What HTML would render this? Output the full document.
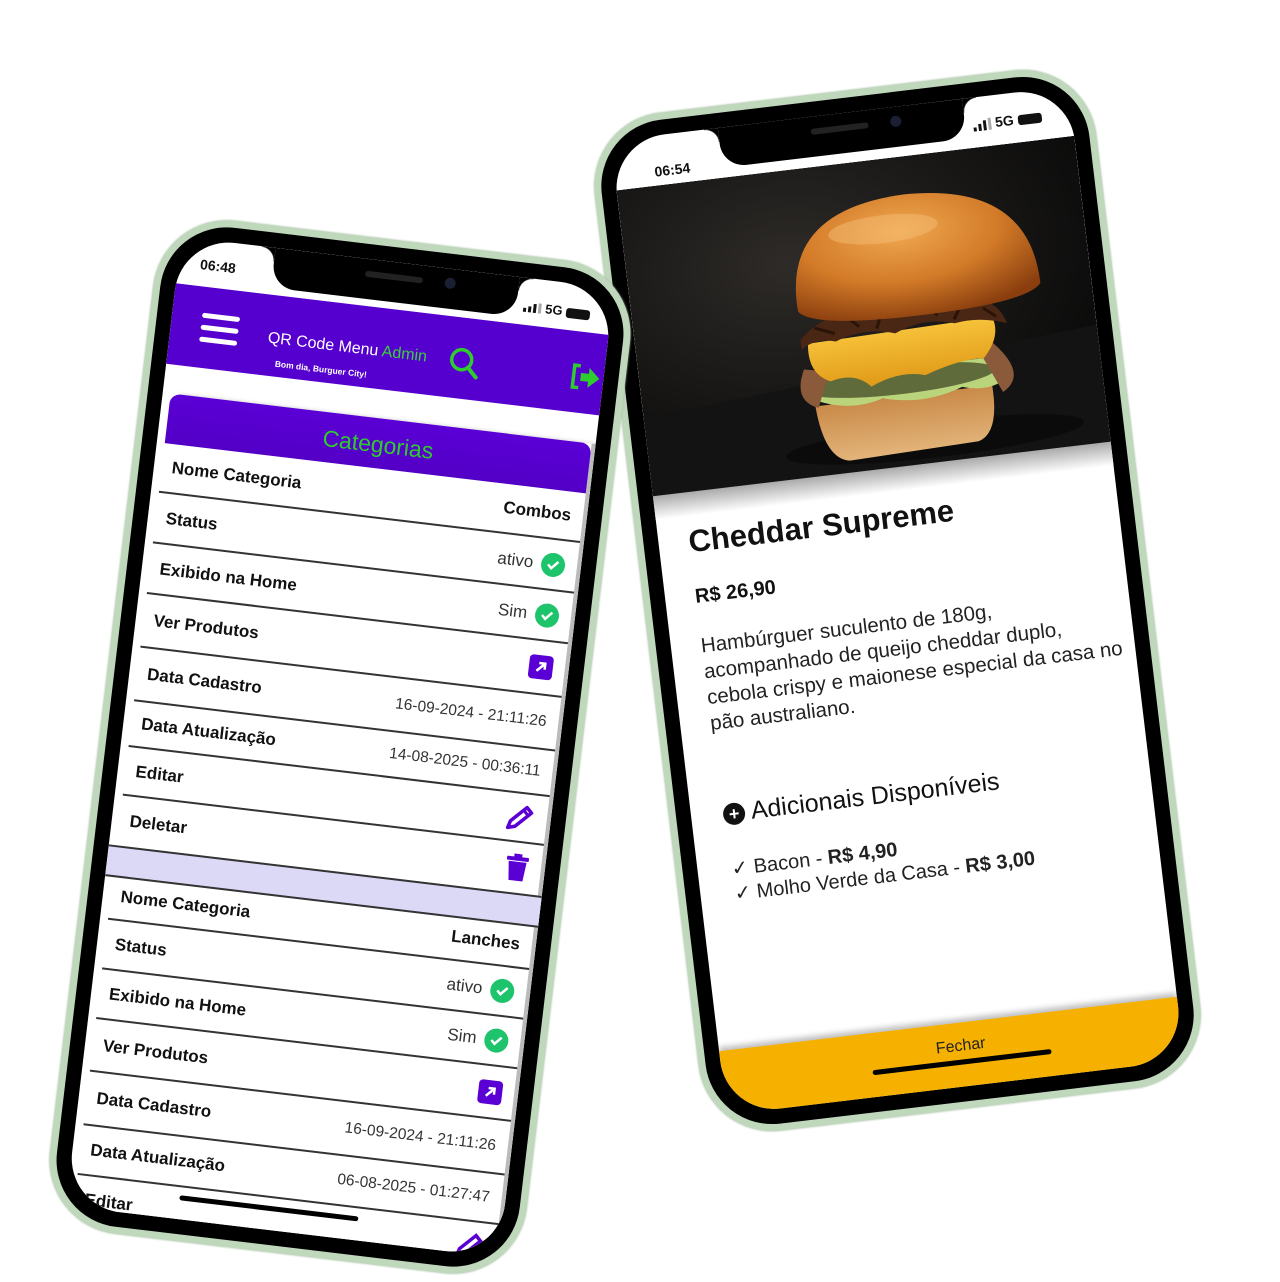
<!DOCTYPE html>
<html><head><meta charset="utf-8">
<style>
html,body{margin:0;padding:0;width:1280px;height:1280px;background:#fff;overflow:hidden;font-family:"Liberation Sans",sans-serif}
.phone{position:absolute;box-sizing:border-box;border:7px solid #bfd8bc;background:#000;border-radius:74px;box-shadow:0 0 2px #9fb89c}
.screen{position:absolute;left:15px;top:15px;background:#fff;border-radius:54px}
.notch{position:absolute;top:0;height:40px;width:246px;background:#000;border-radius:0 0 24px 24px}
.notch:before,.notch:after{content:"";position:absolute;top:0;width:14px;height:14px}
.notch:before{left:-14px;background:radial-gradient(circle at 0 100%,transparent 13px,#000 14px)}
.notch:after{right:-14px;background:radial-gradient(circle at 100% 100%,transparent 13px,#000 14px)}
.spk{position:absolute;top:12px;left:92px;width:58px;height:6px;border-radius:3px;background:#222}
.cam{position:absolute;top:9px;left:172px;width:11px;height:11px;border-radius:50%;background:#1a1f33}
.stat{position:absolute;font-weight:bold;font-size:14px;color:#111}
.sig{position:absolute;display:flex;align-items:flex-end;gap:2px}
.sig i{display:block;width:3px;background:#111}
.bat{display:inline-block;width:24px;height:10px;border:1.5px solid #111;border-radius:3px;background:#111;box-sizing:border-box;vertical-align:middle}
.home{position:absolute;height:5px;width:180px;background:#000;border-radius:3px}
.row{position:absolute;left:0;right:0;border-bottom:2px solid #333;display:flex;align-items:center;justify-content:space-between;padding:0 12px 0 10px;box-sizing:border-box;font-size:17px;color:#111}
.row b{font-weight:bold}
.val{display:flex;align-items:center;gap:8px;color:#333}
.ok{width:24px;height:24px;border-radius:50%;background:#1ec46c;display:inline-flex;align-items:center;justify-content:center}
.pi{width:24px;height:24px;border-radius:4px;background:#5a00d4;display:inline-flex;align-items:center;justify-content:center}
</style></head><body>

<!-- RIGHT PHONE -->
<div class="phone" style="left:645px;top:88px;width:505px;height:1025px;transform:rotate(-6.8deg)">
 <div class="screen" style="width:461px;height:981px;">
  <div style="position:absolute;left:0;top:50px;width:461px;height:310px;overflow:hidden">
   <svg width="461" height="310" viewBox="0 0 461 310">
    <defs>
     <radialGradient id="bg" cx="0.35" cy="0.3" r="0.8"><stop offset="0" stop-color="#2e2b28"/><stop offset="0.6" stop-color="#161514"/><stop offset="1" stop-color="#080808"/></radialGradient>
     <radialGradient id="bun" cx="0.45" cy="0.3" r="0.75"><stop offset="0" stop-color="#f0a850"/><stop offset="0.55" stop-color="#d27a28"/><stop offset="1" stop-color="#8a3e0e"/></radialGradient>
     <linearGradient id="bb" x1="0" y1="0" x2="0" y2="1"><stop offset="0" stop-color="#c98a48"/><stop offset="1" stop-color="#e3b47a"/></linearGradient>
     <linearGradient id="ch" x1="0" y1="0" x2="0" y2="1"><stop offset="0" stop-color="#f7c23a"/><stop offset="1" stop-color="#e09a18"/></linearGradient>
    </defs>
    <rect width="461" height="310" fill="url(#bg)"/>
    <path d="M0 230 L461 190 L461 310 L0 310Z" fill="#131313"/>
    <ellipse cx="287" cy="285" rx="150" ry="18" fill="#0a0a0a" opacity="0.8"/>
    <path d="M172 238 Q175 292 200 296 L330 292 Q352 286 350 238Z" fill="url(#bb)"/>
    <path d="M160 225 Q200 250 240 238 Q280 250 320 236 Q350 246 372 228 L360 210 L170 210Z" fill="#b9d47a"/>
    <ellipse cx="260" cy="222" rx="95" ry="14" fill="#5f6b3a"/>
    <path d="M165 200 Q150 230 175 240 L190 205Z" fill="#8a5a3a"/>
    <path d="M350 190 Q390 230 360 246 L340 200Z" fill="#8a5a3a"/>
    <path d="M172 175 Q168 205 190 215 Q215 208 230 225 Q260 212 285 220 Q320 208 345 210 Q365 190 358 170Z" fill="url(#ch)"/>
    <path d="M165 170 Q200 140 240 150 Q290 135 330 148 Q365 150 372 178 Q345 168 320 172 Q290 162 260 175 Q230 165 200 176 Q180 170 165 180Z" fill="#4a2714"/>
    <path d="M180 160 l20 8 M210 150 l15 14 M250 150 l-8 18 M290 146 l14 16 M330 152 l-10 16 M350 160 l12 10" stroke="#2a1408" stroke-width="3"/>
    <path d="M166 142 Q160 40 285 38 Q410 40 410 142 Q395 160 285 160 Q180 160 166 142Z" fill="url(#bun)"/>
    <ellipse cx="260" cy="70" rx="55" ry="14" fill="#f6c27a" opacity="0.45"/>
   </svg>
  </div>
  <div style="position:absolute;left:0;top:358px;width:461px;height:24px;background:linear-gradient(#aaa,#fff)"></div>
  <div class="notch" style="left:108px"><div class="spk"></div><div class="cam"></div></div>
  <div class="stat" style="left:40px;top:28px">06:54</div>
  <div class="sig" style="left:362px;top:22px;height:12px"><i style="height:4px"></i><i style="height:7px"></i><i style="height:10px"></i><i style="height:12px;background:#aaa"></i></div>
  <div class="stat" style="left:384px;top:19px">5G <span class="bat"></span></div>

  <div style="position:absolute;left:30px;top:390px;font-size:31px;font-weight:bold;color:#111;white-space:nowrap">Cheddar Supreme</div>
  <div style="position:absolute;left:30px;top:452px;font-size:20px;font-weight:bold;color:#111">R$ 26,90</div>
  <div style="position:absolute;left:30px;top:500px;font-size:20.5px;line-height:26px;color:#222;white-space:nowrap">Hambúrguer suculento de 180g,<br>acompanhado de queijo cheddar duplo,<br>cebola crispy e maionese especial da casa no<br>pão australiano.</div>
  <div style="position:absolute;left:32px;top:668px;font-size:25px;color:#111;white-space:nowrap;display:flex;align-items:center;gap:6px"><span style="display:inline-flex;width:22px;height:22px;border-radius:50%;background:#111;color:#fff;font-size:18px;font-weight:bold;align-items:center;justify-content:center;line-height:1">+</span>Adicionais Disponíveis</div>
  <div style="position:absolute;left:34px;top:726px;font-size:20px;line-height:25px;color:#222;white-space:nowrap">✓ Bacon - <b>R$ 4,90</b><br>✓ Molho Verde da Casa - <b>R$ 3,00</b></div>

  <div style="position:absolute;left:0;top:917px;width:461px;height:64px;background:#f6b100;border-radius:0 0 54px 54px;box-shadow:0 -4px 6px rgba(0,0,0,.25)"></div>
  <div style="position:absolute;left:0;width:461px;top:932px;text-align:center;font-size:16px;color:#222;padding-left:20px;box-sizing:border-box">Fechar</div>
  <div class="home" style="left:150px;top:954px"></div>
 </div>
</div>

<!-- LEFT PHONE -->
<div class="phone" style="left:100px;top:237px;width:480px;height:1020px;transform:rotate(6.8deg)">
 <div class="screen" style="width:436px;height:976px;overflow:hidden">
  <div style="position:absolute;left:0;top:47px;width:436px;height:81px;background:#5500cf"></div>
  <div class="notch" style="left:95px"><div class="spk"></div><div class="cam"></div></div>
  <div class="stat" style="left:22px;top:17px">06:48</div>
  <div class="sig" style="left:348px;top:24px;height:10px"><i style="height:4px"></i><i style="height:6px"></i><i style="height:9px"></i><i style="height:10px;background:#aaa"></i></div>
  <div class="stat" style="left:370px;top:21px;font-size:13px">5G <span class="bat"></span></div>
  <div style="position:absolute;left:30px;top:73px;width:38px">
   <div style="height:5px;background:#fff;border-radius:3px;margin-bottom:7px"></div>
   <div style="height:5px;background:#fff;border-radius:3px;margin-bottom:7px"></div>
   <div style="height:5px;background:#fff;border-radius:3px"></div>
  </div>
  <div style="position:absolute;left:98px;top:82px;font-size:16px;color:#fff;white-space:nowrap">QR Code Menu <span style="color:#3ad13a">Admin</span></div>
  <div style="position:absolute;left:108px;top:110px;font-size:8.5px;font-weight:bold;color:#fff;white-space:nowrap">Bom dia, Burguer City!</div>
  <svg style="position:absolute;left:280px;top:76px" width="32" height="32" viewBox="0 0 32 32"><circle cx="13" cy="13" r="10" fill="none" stroke="#2ecc2e" stroke-width="3.5"/><path d="M20 20 L29 29" stroke="#2ecc2e" stroke-width="4" stroke-linecap="round"/></svg>
  <svg style="position:absolute;left:402px;top:78px" width="32" height="28" viewBox="0 0 32 28"><path d="M10 3 H4 V25 H10" fill="none" stroke="#2ecc2e" stroke-width="3.5"/><path d="M11 10 H19 V4 L30 14 L19 24 V18 H11Z" fill="#2ecc2e"/></svg>

  <div style="position:absolute;left:8px;top:157px;width:424px;height:840px;box-shadow:6px 0 6px -2px #888;border-right:4px solid #bbb;background:#fff">
   <div style="position:absolute;left:0;top:0;right:0;height:50px;background:linear-gradient(#5a00d6,#5300c6);border-radius:10px 10px 0 0;color:#2ecc2e;font-size:23px;text-align:center;line-height:52px">Categorias</div>
   <div class="row" style="top:50px;height:50px"><b>Nome Categoria</b><span class="val" style="color:#111"><b>Combos</b></span></div>
   <div class="row" style="top:100px;height:51px"><b>Status</b><span class="val">ativo <span class="ok"><svg width="14" height="12" viewBox="0 0 14 12"><path d="M2 6 L5.5 9.5 L12 2.5" fill="none" stroke="#fff" stroke-width="2.5"/></svg></span></span></div>
   <div class="row" style="top:151px;height:51px"><b>Exibido na Home</b><span class="val">Sim <span class="ok"><svg width="14" height="12" viewBox="0 0 14 12"><path d="M2 6 L5.5 9.5 L12 2.5" fill="none" stroke="#fff" stroke-width="2.5"/></svg></span></span></div>
   <div class="row" style="top:202px;height:54px"><b>Ver Produtos</b><span class="pi"><svg width="14" height="14" viewBox="0 0 14 14"><path d="M3 11 L11 3 M5 3 H11 V9" fill="none" stroke="#fff" stroke-width="2.5"/></svg></span></div>
   <div class="row" style="top:256px;height:54px"><b>Data Cadastro</b><span class="val" style="font-size:15.5px">16-09-2024 - 21:11:26</span></div>
   <div class="row" style="top:310px;height:46px"><b>Data Atualização</b><span class="val" style="font-size:15.5px">14-08-2025 - 00:36:11</span></div>
   <div class="row" style="top:356px;height:49px"><b>Editar</b><svg width="30" height="30" viewBox="0 0 30 30"><path d="M4 26 L6 19 L21 4 L26 9 L11 24Z" fill="none" stroke="#5a00d4" stroke-width="3.5" stroke-linejoin="round"/><path d="M18 7 L23 12" stroke="#5a00d4" stroke-width="3"/></svg></div>
   <div class="row" style="top:405px;height:50px;border-bottom:none"><b>Deletar</b><svg width="24" height="28" viewBox="0 0 24 28"><rect x="1" y="3" width="22" height="4" rx="1" fill="#5a00d4"/><rect x="8" y="0" width="8" height="4" fill="#5a00d4"/><path d="M3 8 H21 L19 27 H5Z" fill="#5a00d4"/></svg></div>
   <div style="position:absolute;left:-8px;right:-8px;top:455px;height:28px;background:#dcd9f7;border-top:2px solid #333;border-bottom:2px solid #333"></div>
   <div class="row" style="top:483px;height:47px"><b>Nome Categoria</b><span class="val" style="color:#111"><b>Lanches</b></span></div>
   <div class="row" style="top:530px;height:50px"><b>Status</b><span class="val">ativo <span class="ok"><svg width="14" height="12" viewBox="0 0 14 12"><path d="M2 6 L5.5 9.5 L12 2.5" fill="none" stroke="#fff" stroke-width="2.5"/></svg></span></span></div>
   <div class="row" style="top:580px;height:50px"><b>Exibido na Home</b><span class="val">Sim <span class="ok"><svg width="14" height="12" viewBox="0 0 14 12"><path d="M2 6 L5.5 9.5 L12 2.5" fill="none" stroke="#fff" stroke-width="2.5"/></svg></span></span></div>
   <div class="row" style="top:630px;height:53px"><b>Ver Produtos</b><span class="pi"><svg width="14" height="14" viewBox="0 0 14 14"><path d="M3 11 L11 3 M5 3 H11 V9" fill="none" stroke="#fff" stroke-width="2.5"/></svg></span></div>
   <div class="row" style="top:683px;height:54px"><b>Data Cadastro</b><span class="val" style="font-size:15.5px">16-09-2024 - 21:11:26</span></div>
   <div class="row" style="top:737px;height:50px"><b>Data Atualização</b><span class="val" style="font-size:15.5px">06-08-2025 - 01:27:47</span></div>
   <div class="row" style="top:787px;height:50px"><b>Editar</b><svg width="30" height="30" viewBox="0 0 30 30"><path d="M4 26 L6 19 L21 4 L26 9 L11 24Z" fill="none" stroke="#5a00d4" stroke-width="3.5"/></svg></div>
  </div>
  <div class="home" style="left:112px;top:952px"></div>
 </div>
</div>
</body></html>
